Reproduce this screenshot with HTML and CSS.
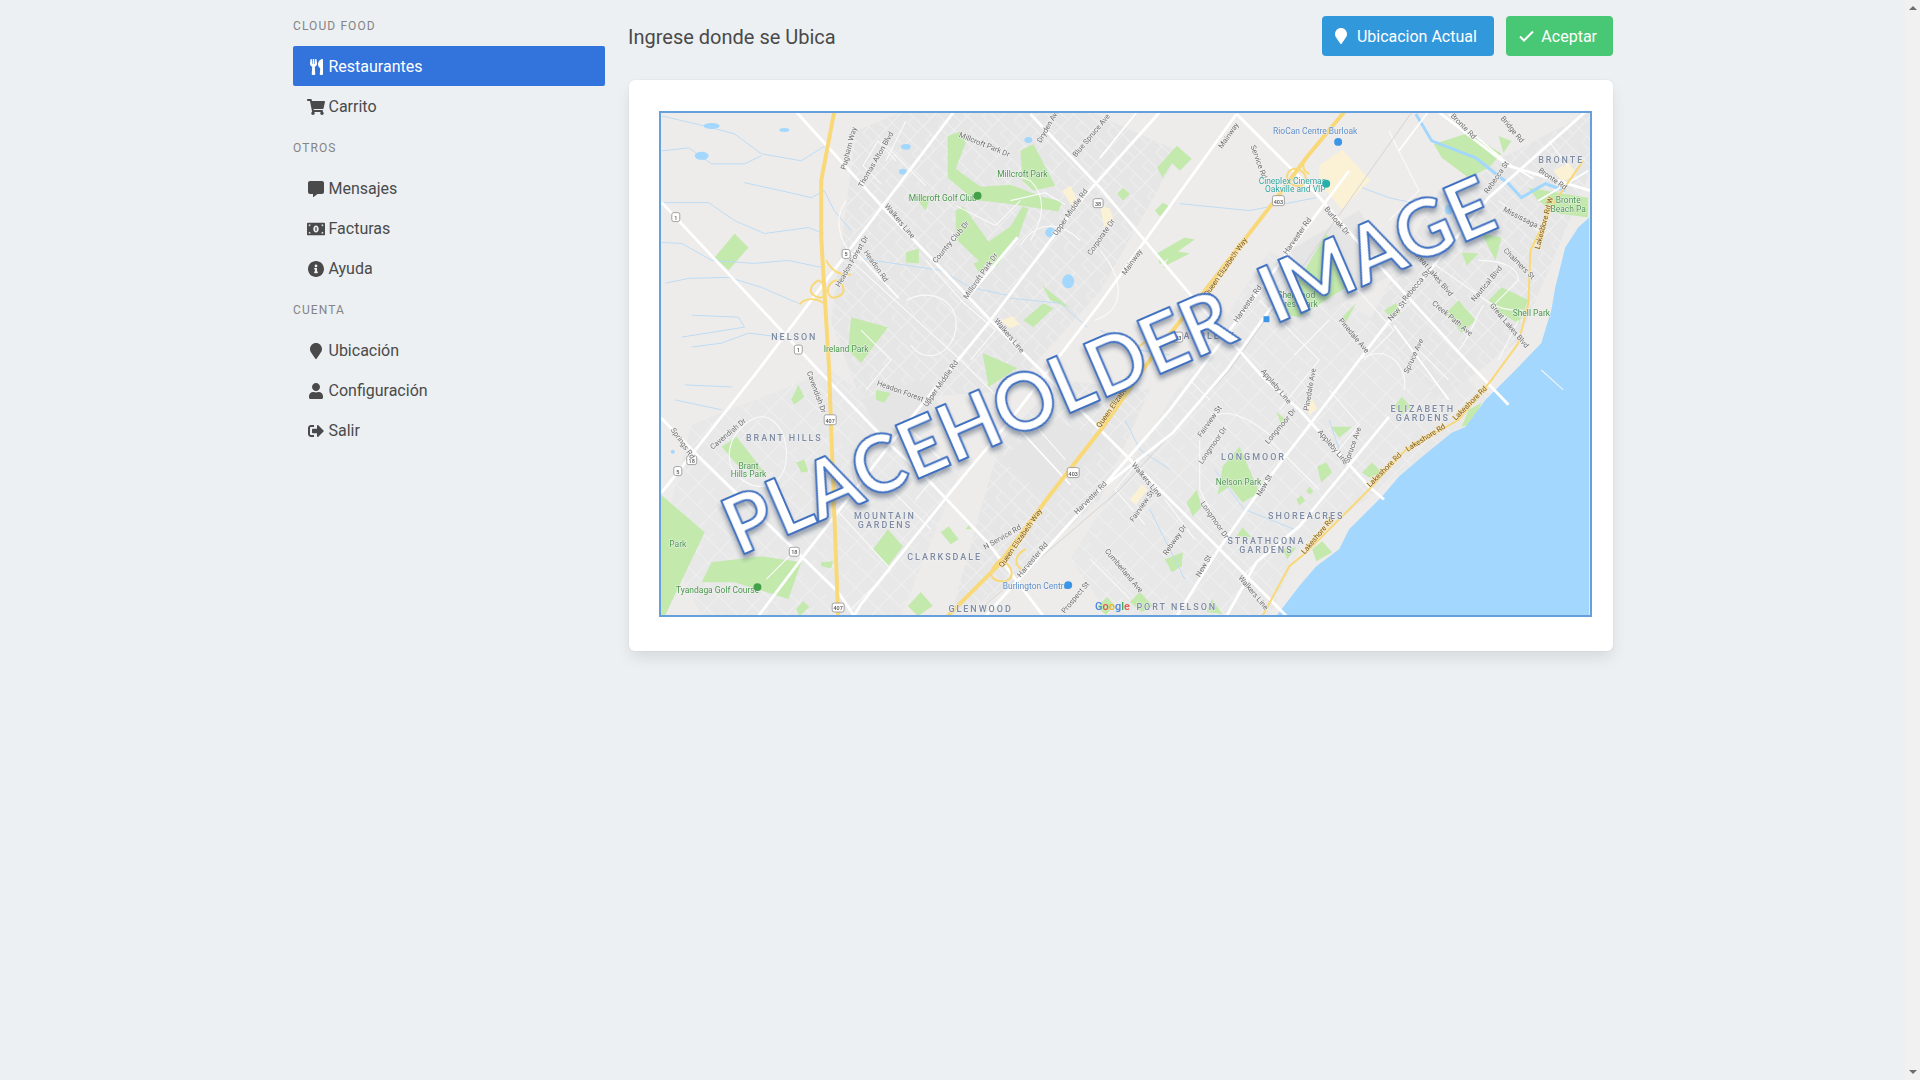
FILE: index.html
```html
<!DOCTYPE html>
<html lang="es">
<head>
    <meta charset="UTF-8">
    <meta name="viewport" content="width=device-width, initial-scale=1.0">
    <title>Cloud Food</title>
    <link rel="stylesheet" href="styles.css">
</head>
<body>
    <div class="page">
        <aside class="sidebar">
            <p class="menu-label">Cloud Food</p>
            <ul class="menu-list">
                <li><a class="is-active"><span class="icon"><svg width="13" height="16" viewBox="0 0 416 512"><path d="M207.9 15.2c.8 4.7 16.1 94.5 16.1 128.8 0 52.3-27.8 89.6-68.9 104.6L168 486.7c.7 13.7-10.2 25.3-24 25.3H80c-13.7 0-24.7-11.5-24-25.3l12.9-238.1C27.7 233.6 0 196.2 0 144 0 109.6 15.3 19.9 16.1 15.2 19.3-5.1 61.4-5.4 64 16.3v141.2c1.3 3.4 15.1 3.2 16 0 1.4-25.3 7.9-139.2 8-141.8 3.3-20.8 44.7-20.8 47.9 0 .2 2.7 6.6 116.5 8 141.8.9 3.2 14.8 3.4 16 0V16.3c2.6-21.6 44.8-21.4 48-1.1zm119.2 285.7l-15 185.1c-1.2 14 9.9 26 23.9 26h56c13.3 0 24-10.7 24-24V24c0-13.2-10.7-24-24-24-82.5 0-221.4 178.5-64.9 300.9z"/></svg></span>Restaurantes</a></li>
                <li><a><span class="icon"><svg width="18" height="16" viewBox="0 0 576 512"><path d="M528.12 301.319l47.273-208C578.806 78.301 567.391 64 551.99 64H159.208l-9.166-44.81C147.758 8.021 137.93 0 126.529 0H24C10.745 0 0 10.745 0 24v16c0 13.255 10.745 24 24 24h69.883l70.248 343.435C147.325 417.1 136 435.222 136 456c0 30.928 25.072 56 56 56s56-25.072 56-56c0-15.674-6.447-29.835-16.824-40h209.647C430.447 426.165 424 440.326 424 456c0 30.928 25.072 56 56 56s56-25.072 56-56c0-22.172-12.888-41.332-31.579-50.405l5.517-24.276c3.413-15.018-8.002-29.319-23.403-29.319H218.117l-6.545-32h293.145c11.206 0 20.92-7.754 23.403-18.681z"/></svg></span>Carrito</a></li>
            </ul>
            <p class="menu-label">Otros</p>
            <ul class="menu-list">
                <li><a><span class="icon"><svg width="16" height="16" viewBox="0 0 512 512"><path d="M448 0H64C28.7 0 0 28.7 0 64v288c0 35.3 28.7 64 64 64h96v84c0 9.8 11.2 15.5 19.1 9.7L304 416h144c35.3 0 64-28.7 64-64V64c0-35.3-28.7-64-64-64z"/></svg></span>Mensajes</a></li>
                <li><a><span class="icon"><svg width="18" height="14" viewBox="0 0 640 448"><path fill-rule="evenodd" d="M32 0h576c18 0 32 14 32 32v384c0 18-14 32-32 32H32c-18 0-32-14-32-32V32C0 14 14 0 32 0zM64 64v64c35 0 64-29 64-64H64zm512 0h-64c0 35 29 64 64 64V64zM64 384h64c0-35-29-64-64-64v64zm512 0v-64c-35 0-64 29-64 64h64zM320 96c-53 0-96 57-96 128s43 128 96 128 96-57 96-128-43-128-96-128z"/><rect x="296" y="160" width="48" height="128"/></svg></span>Facturas</a></li>
                <li><a><span class="icon"><svg width="16" height="16" viewBox="8 8 496 496"><path d="M256 8C119.043 8 8 119.083 8 256c0 136.997 111.043 248 248 248s248-111.003 248-248C504 119.083 392.957 8 256 8zm0 110c23.196 0 42 18.804 42 42s-18.804 42-42 42-42-18.804-42-42 18.804-42 42-42zm56 254c0 6.627-5.373 12-12 12h-88c-6.627 0-12-5.373-12-12v-24c0-6.627 5.373-12 12-12h12v-64h-12c-6.627 0-12-5.373-12-12v-24c0-6.627 5.373-12 12-12h64c6.627 0 12 5.373 12 12v100h12c6.627 0 12 5.373 12 12v24z"/></svg></span>Ayuda</a></li>
            </ul>
            <p class="menu-label">Cuenta</p>
            <ul class="menu-list">
                <li><a><span class="icon"><svg width="12" height="16" viewBox="0 0 384 512"><path d="M172.268 501.67C26.97 291.031 0 269.413 0 192 0 85.961 85.961 0 192 0s192 85.961 192 192c0 77.413-26.97 99.031-172.268 309.67-9.535 13.774-29.93 13.773-39.464 0z"/></svg></span>Ubicación</a></li>
                <li><a><span class="icon"><svg width="14" height="16" viewBox="0 0 448 512"><path d="M224 256c70.7 0 128-57.3 128-128S294.7 0 224 0 96 57.3 96 128s57.3 128 128 128zm89.6 32h-16.7c-22.2 10.2-46.9 16-72.9 16s-50.6-5.8-72.9-16h-16.7C60.2 288 0 348.2 0 422.4V464c0 26.5 21.5 48 48 48h352c26.5 0 48-21.5 48-48v-41.6c0-74.2-60.2-134.4-134.4-134.4z"/></svg></span>Configuración</a></li>
                <li><a><span class="icon"><svg width="16" height="14" viewBox="0 64 512 384"><path d="M497 273L329 441c-15 15-41 4.5-41-17v-96H152c-13.3 0-24-10.7-24-24v-96c0-13.3 10.7-24 24-24h136V88c0-21.4 25.9-32 41-17l168 168c9.3 9.4 9.3 24.6 0 34zM192 436v-40c0-6.6-5.4-12-12-12H96c-17.7 0-32-14.3-32-32V160c0-17.7 14.3-32 32-32h84c6.6 0 12-5.4 12-12V76c0-6.6-5.4-12-12-12H96c-53 0-96 43-96 96v192c0 53 43 96 96 96h84c6.6 0 12-5.4 12-12z"/></svg></span>Salir</a></li>
            </ul>
        </aside>

        <main class="content">
            <div class="toolbar">
                <h2 class="title">Ingrese donde se Ubica</h2>
                <div class="buttons">
                    <a class="button is-info"><svg class="btn-icon" width="12" height="16" viewBox="0 0 384 512"><path d="M172.268 501.67C26.97 291.031 0 269.413 0 192 0 85.961 85.961 0 192 0s192 85.961 192 192c0 77.413-26.97 99.031-172.268 309.67-9.535 13.774-29.93 13.773-39.464 0z"/></svg>Ubicacion Actual</a>
                    <a class="button is-success"><svg class="btn-icon check" width="15" height="12" viewBox="0 0 15 12"><path d="M1 6.5l4 4L14 1.5"/></svg>Aceptar</a>
                </div>
            </div>

            <div class="box">
                <svg class="map" viewBox="660 112 931 504" width="933" height="506" role="img" aria-label="Mapa">
                    <defs>
                        <filter id="soft" x="0" y="0" width="1" height="1"><feGaussianBlur stdDeviation="0.35"/></filter>
                        <filter id="lift" x="-5%" y="-20%" width="110%" height="140%"><feDropShadow dx="-2" dy="4" stdDeviation="2.2" flood-color="#2b3a55" flood-opacity=".4"/></filter>
                        <pattern id="blocks" width="25" height="19" patternUnits="userSpaceOnUse" patternTransform="rotate(44)"><rect width="25" height="19" fill="#e6e6e6"/><path d="M0 .5h25M.5 0v19M12 0v9M12 9h13" class="grid"/></pattern>
                        <pattern id="blocks2" width="17" height="31" patternUnits="userSpaceOnUse" patternTransform="rotate(-46)"><rect width="17" height="31" fill="#e8e8e8"/><path d="M0 .5h17M.5 0v31M0 15h9" class="grid"/></pattern>
                    </defs>
                    <g filter="url(#soft)">
                        <rect x="659" y="111" width="933" height="506" class="land"/>

                        <!-- zonas urbanas -->
                        <path fill="url(#blocks)" d="M855 130l45-19h190l90 40-80 140-90 100-150 10-30-80z"/>
                        <path fill="url(#blocks2)" d="M690 425l140-55 130 100-60 147H700l-40-80z"/>
                        <path fill="url(#blocks)" d="M1000 440l60-60 90 10-50 110-110 100-40 17z"/>
                        <path fill="url(#blocks2)" d="M1170 400l100-150 120 80 110 70-200 150-30 67h-160l-40-57z"/>
                        <path fill="url(#blocks)" d="M1440 190l152-79v60l-72 170-80 60-70-80z"/>
                        <path class="urban" d="M1290 250l70-40 40 60-70 40zM1000 460l50-40 60 20-60 60zM860 400l60-20 30 40-60 30z"/>

                        <!-- parques -->
                        <g class="park">
                            <path d="M1033 143l22 42-22 5-11-10-2-30zM947 135l14-5 4 12-10 26 25 18 30-2 32 12 20 5-4 10-50-8-35-4-26-22zM913 195l17 0-5 15zM955 210l8-4 25 35 22-15 12-20 6 2-10 28-22 30-14-2-27-26zM713 257l20-24 14 14-20 23zM850 317l37 10-27 36-13-13zM905 252l13-4v15l-13-1zM973 263l7-3 5 7-7 5zM1042 285l28 23-20-8zM1023 320l20-17 10 5-20 19zM982 353l35 15-29 19zM875 390l15 3-7 10-8-3zM1163 268l10-18 17 3-20 10zM1157 167l20-22 15 13-12 12-8-8-9 15zM1117 193l6-6 7 6-7 7zM1155 210l8-8 6 3-9 11zM1280 313l27-46 20-34 26 50-53 34zM1435 143l35-11 33 21-13 14-20 10-27-20zM1500 135l13 5-8 12zM1530 187l60 10v20l-30-4-20-13zM1483 233l20 4-6 23zM1463 252l17 1-12 12zM1490 300l13-13 27 13-10 23-23-13zM1447 313l13-13 17 20-14 13zM1385 310l12-7 5 10-9 5zM1340 320l17-17-10 19zM659 495l44 38-40 84h-4zM710 563l50-6 40 6-13 37-54-17-33 0zM720 447l15-10 18 23 10 13-26-6zM790 400l7-15 6 12-10 8zM795 463l8-3 4 12-7 1zM872 550l15-20 15 17-15 20zM940 533l8-6 10 13-8 5zM820 563l12-1-2 7-10-2zM907 607l13-14 12 14-15 10zM795 610l7-8 6 6-10 9zM1223 467l17-20 20 46-17 10-13-16-12 8zM1187 503l10-13 5 17-9 10zM1277 412l10 8-5 5zM1332 427l21 0-13 11zM1318 467l9-4 6 10-11 10zM1363 473l10-10 10 10-13 5zM1297 500l5-4 4 5-6 5zM1307 492l3-5 4 5-3 3zM1395 407l8-10 9 10-9 8zM1463 427l7-17 13-7-10 22zM1313 550l10-8 10 11-16 9zM1237 537l6-9 9 10zM1283 550l14-2-9 12zM1165 560l18-7-1 14-10 6zM1130 603l10-10 13 14-11 6zM1207 613l5-13 11 15zM1157 253l28-16 10 2-35 25zM965 530l3-4 3 4zM1097 608l10-10 7 8-8 10z"/>
                        </g>
                        <path class="beige" d="M1320 165l23-16 28 30-28 30-23-27zM1062 190l10 16 6-5-8-16zM1100 205l10 3 4 14-10 4zM1000 320l12-4 7 8-9 4zM1130 500l12-15 6 5-12 15zM1305 405l8-6 5 10-8 6zM1555 170l16-8 7 12-14 7z"/>

                        <!-- agua -->
                        <g class="stream">
                            <path d="M660 115l43 10 30 8 27 20 40 7 27-17M660 150l27-3 23 16h33l17-8M743 182l37 8 30 7 13-7 10 20 17 20M660 202h47l26 18 30 13 44-6 16 6M660 242l20 1 30 17 43 3 34-3 33 7M663 283l24-5 40-1 33 10 37 16M690 315l47 2 6 10-63 10M690 347l30-4 27-10 33 4M683 385l47 2M673 400l47 10M860 258l33 5 47 7 30 17 37 8M1010 298l50 5 27 24M1180 203l70 7 67-13M1363 187l27 10 27 6M1100 330l40 20 30 5M1125 420l15 30 30 20M1215 470l30 40 50 20M1150 510l20 40 15 30M1330 420l10 30"/>
                        </g>
                        <path class="creek" d="M1417 113l16 27 44 17 33 26 13 14 24-14 20 7"/>
                        <g class="water">
                            <path d="M1277 617l23-30 17-20 23-17 10-20 17-17 16-16 17-20 20-17 33-27 14-6 20-27 30-30 26-27 10-33 4-23 10-40 13-20 11-10v400z"/>
                            <ellipse cx="710" cy="125" rx="8" ry="3"/><ellipse cx="700" cy="155" rx="7" ry="4"/><ellipse cx="783" cy="129" rx="5" ry="2"/><ellipse cx="905" cy="146" rx="5" ry="3"/><ellipse cx="902" cy="171" rx="4" ry="3"/><ellipse cx="1028" cy="139" rx="4" ry="3"/><ellipse cx="1068" cy="281" rx="6" ry="7"/><ellipse cx="1050" cy="232" rx="5" ry="5"/><ellipse cx="1450" cy="209" rx="4" ry="5"/><ellipse cx="671" cy="452" rx="2" ry="2"/>
                        </g>
                        <path class="pier" d="M1543 370l22 20"/>

                        <!-- calles menores -->
                        <g class="street">
                            <path d="M853 263l107 97 40 40M895 160l-18-20-15 25 18 18M880 140l45 45M905 120l-20 40M845 200c-15 20-5 50 15 60M860 330l30 30-25 30M905 300c30-15 55 5 50 30s-30 35-45 15M925 260l40 45M1005 170l25 10c15 15 15 35 0 60M1010 200l35-8 20 12M955 205l40 20 25-25M1020 245c15-25 40-25 60-5M1100 250c25 30 25 60-5 70M960 300l35 30-25 30M900 420l45 45-30 35M860 490c-20-30 5-60 30-50M750 420c-25 15-30 45-10 60s45 5 45-25-20-45-35-35M760 520l35 30-30 30M880 480l50 50M835 510l55 60-40 40M1030 420l35 40M1115 330c20 15 30 40 10 60M1180 305c20-15 40 5 40 25l-20 25M1260 300l60 60-40 50M1350 280l45 50-30 30M1210 420c10-10 30-10 60 15M1200 440v50l15 30M1270 440l50 50M1330 390l30 35-20 25M1360 360c30-20 50 10 45 30M1480 260c30 0 40 10 40 20l-25 25M1430 260l50 35c20 15 30 15 45 15M1485 305c-10 15-15 35-25 45M1420 350l30 30M1330 320l-35 35M1520 320l-20 40M1165 500l30 40M1090 560l40 40M1240 580l30-30M1140 460l-25 30 30 35M1190 380l20 20M1390 130l30 60-30 30M1500 200l40 30M1550 140l20 25"/>
                        </g>

                        <path class="rail" d="M1413 111l-183 259-110 120-140 120"/>

                        <!-- vias principales -->
                        <g class="road">
                            <path d="M795 111l87 96 108 113 50 50 93 93 130 130 24 24M660 202l157 168 70 73 40 37 60 63 56 74M659 418l41 42 137 133 16 24M1237 113l80 80 43 50 107 117 43 45M1030 113l70 74 87 103 76 87 37 33 70 77 15 13M1440 111l70 54 82 25M953 111l-196 259-97 123M1160 111l-77 86-33 43-60 80-87 107-103 133-43 57M1237 113l-94 130-43 60-90 117-50 60-100 125-7 12M1350 170l-60 80-50 67-70 93-67 77-118 130M1587 111l-97 86-97 120-130 170-46 66-40 64M1390 417l-90 110-43 36-30 54M1100 490l73-57 54-63 50-70M1017 237l-50 60"/>
                        </g>
                        <path class="road-thin" d="M1100 157l37-46M853 250l45 48M1450 113l60 50 25 15M1395 325l55 75M1540 200l50-30M1010 420l60 65M1400 150l30-40"/>

                        <!-- autopistas -->
                        <g class="highway">
                            <path d="M833 111l-13 69v57l3 50 5 83 2 60 7 187M1345 111l-38 46-34 46-73 94-43 53-54 77-53 68-53 72-50 50"/>
                            <path class="ramp" d="M1263 617l27-50 17-14 63-63 37-40 53-30 33-40 27-37 10-40 2-53 23-47 30-43"/>
                            <path class="ramp" d="M817 280c-10 6-10 14 0 17s10-14 0-17zM835 280c10 5 10 14 0 17s-12-14 0-17zM1000 560c-10 8-15 20 0 22s15-15 0-22zM1025 550c-10 5-12 15-4 20M1150 340c-15 5-20 20-5 25M1296 168c-10 0-12 14 0 17s16-14 0-17zM1310 155c-8 5-8 15 0 18M825 305c-8-8-20-8-27-1M825 260c5 10 14 16 25 14"/>
                        </g>

                        <!-- escudos -->
                        <g class="shield">
                            <rect x="823" y="415" width="12" height="10" rx="2"/><text x="829" y="423">407</text>
                            <rect x="831" y="604" width="12" height="9" rx="2"/><text x="837" y="611">407</text>
                            <rect x="1067" y="468" width="12" height="10" rx="2"/><text x="1073" y="476">403</text>
                            <rect x="1273" y="195" width="12" height="10" rx="2"/><text x="1279" y="203">403</text>
                            <rect x="1171" y="332" width="12" height="10" rx="2"/><text x="1177" y="340">403</text>
                            <rect x="670" y="212" width="8" height="9" rx="2"/><text x="674" y="219">1</text>
                            <rect x="793" y="345" width="8" height="9" rx="2"/><text x="797" y="352">1</text>
                            <rect x="841" y="249" width="8" height="9" rx="2"/><text x="845" y="256">5</text>
                            <rect x="1093" y="198" width="10" height="9" rx="2"/><text x="1098" y="205">38</text>
                            <rect x="685" y="456" width="10" height="9" rx="2"/><text x="690" y="463">18</text>
                            <rect x="788" y="548" width="10" height="9" rx="2"/><text x="793" y="555">18</text>
                            <rect x="672" y="467" width="8" height="9" rx="2"/><text x="676" y="474">5</text>
                        </g>

                        <!-- etiquetas de calles -->
                        <g class="lbl">
                            <text x="983" y="146" transform="rotate(22 983 146)">Millcroft Park Dr</text>
                            <text x="850" y="148" transform="rotate(-75 850 148)">Pugham Way</text>
                            <text x="877" y="160" transform="rotate(-60 877 160)">Thomas Alton Blvd</text>
                            <text x="897" y="222" transform="rotate(50 897 222)">Walkers Line</text>
                            <text x="952" y="243" transform="rotate(-50 952 243)">Country Club Dr</text>
                            <text x="982" y="277" transform="rotate(-55 982 277)">Millcroft Park Dr</text>
                            <text x="853" y="262" transform="rotate(-60 853 262)">Headon Forest Dr</text>
                            <text x="873" y="267" transform="rotate(55 873 267)">Headon Rd</text>
                            <text x="1072" y="213" transform="rotate(-55 1072 213)">Upper Middle Rd</text>
                            <text x="1103" y="238" transform="rotate(-55 1103 238)">Corporate Dr</text>
                            <text x="1007" y="337" transform="rotate(50 1007 337)">Walkers Line</text>
                            <text x="1093" y="136" transform="rotate(-50 1093 136)">Blue Spruce Ave</text>
                            <text x="1050" y="126" transform="rotate(-60 1050 126)">Dryden Ave</text>
                            <text x="1231" y="136" transform="rotate(-55 1231 136)">Mainway</text>
                            <text x="1257" y="162" transform="rotate(70 1257 162)">Service Rd</text>
                            <text x="1463" y="127" transform="rotate(45 1463 127)">Bronte Rd</text>
                            <text x="1512" y="130" transform="rotate(50 1512 130)">Bridge Rd</text>
                            <text x="1553" y="180" transform="rotate(35 1553 180)">Bronte Rd</text>
                            <text x="1500" y="178" transform="rotate(-55 1500 178)">Rebecca St</text>
                            <text x="1525" y="221" transform="rotate(27 1525 221)">Mississaga St</text>
                            <text x="1336" y="222" transform="rotate(50 1336 222)">Burloak Dr</text>
                            <text x="1300" y="237" transform="rotate(-55 1300 237)">Harvester Rd</text>
                            <text x="1134" y="263" transform="rotate(-55 1134 263)">Mainway</text>
                            <text x="1250" y="305" transform="rotate(-55 1250 305)">Harvester Rd</text>
                            <text x="1433" y="275" transform="rotate(50 1433 275)">Great Lakes Blvd</text>
                            <text x="1419" y="287" transform="rotate(-50 1419 287)">Rebecca St</text>
                            <text x="1400" y="312" transform="rotate(-50 1400 312)">New St</text>
                            <text x="1452" y="320" transform="rotate(40 1452 320)">Creek Path Ave</text>
                            <text x="1353" y="337" transform="rotate(50 1353 337)">Pinedale Ave</text>
                            <text x="1519" y="265" transform="rotate(45 1519 265)">Chalmers St</text>
                            <text x="1490" y="285" transform="rotate(-50 1490 285)">Nautical Blvd</text>
                            <text x="1509" y="327" transform="rotate(50 1509 327)">Great Lakes Blvd</text>
                            <text x="1417" y="357" transform="rotate(-65 1417 357)">Spruce Ave</text>
                            <text x="728" y="436" transform="rotate(-40 728 436)">Cavendish Dr</text>
                            <text x="813" y="393" transform="rotate(70 813 393)">Cavendish Dr</text>
                            <text x="903" y="395" transform="rotate(20 903 395)">Headon Forest Dr</text>
                            <text x="942" y="385" transform="rotate(-55 942 385)">Upper Middle Rd</text>
                            <text x="679" y="445" transform="rotate(55 679 445)">Springs Rd</text>
                            <text x="1003" y="540" transform="rotate(-30 1003 540)">N Service Rd</text>
                            <text x="1092" y="500" transform="rotate(-45 1092 500)">Harvester Rd</text>
                            <text x="1034" y="562" transform="rotate(-50 1034 562)">Harvester Rd</text>
                            <text x="1077" y="600" transform="rotate(-50 1077 600)">Prospect St</text>
                            <text x="1275" y="388" transform="rotate(50 1275 388)">Appleby Line</text>
                            <text x="1332" y="449" transform="rotate(50 1332 449)">Appleby Line</text>
                            <text x="1215" y="447" transform="rotate(-55 1215 447)">Longmoor Dr</text>
                            <text x="1283" y="428" transform="rotate(-50 1283 428)">Longmoor Dr</text>
                            <text x="1213" y="522" transform="rotate(55 1213 522)">Longmoor Dr</text>
                            <text x="1145" y="482" transform="rotate(50 1145 482)">Walkers Line</text>
                            <text x="1252" y="595" transform="rotate(50 1252 595)">Walkers Line</text>
                            <text x="1212" y="423" transform="rotate(-55 1212 423)">Fairview St</text>
                            <text x="1144" y="508" transform="rotate(-55 1144 508)">Fairview St</text>
                            <text x="1267" y="487" transform="rotate(-60 1267 487)">New St</text>
                            <text x="1206" y="568" transform="rotate(-60 1206 568)">New St</text>
                            <text x="1356" y="446" transform="rotate(-70 1356 446)">Spruce Ave</text>
                            <text x="1313" y="390" transform="rotate(-80 1313 390)">Pinedale Ave</text>
                            <text x="1122" y="573" transform="rotate(50 1122 573)">Cumberland Ave</text>
                            <text x="1177" y="542" transform="rotate(-55 1177 542)">Rebway Dr</text>
                        </g>
                        <g class="lbl brown">
                            <text x="1548" y="223" transform="rotate(-75 1548 223)">Lakeshore Rd W</text>
                            <text x="1228" y="268" transform="rotate(-55 1228 268)">Queen Elizabeth Way</text>
                            <text x="1022" y="540" transform="rotate(-55 1022 540)">Queen Elizabeth Way</text>
                            <text x="1120" y="400" transform="rotate(-55 1120 400)">Queen Elizabeth Way</text>
                            <text x="1320" y="538" transform="rotate(-50 1320 538)">Lakeshore Rd</text>
                            <text x="1387" y="472" transform="rotate(-45 1387 472)">Lakeshore Rd</text>
                            <text x="1428" y="440" transform="rotate(-32 1428 440)">Lakeshore Rd</text>
                            <text x="1473" y="405" transform="rotate(-45 1473 405)">Lakeshore Rd</text>
                        </g>

                        <!-- barrios -->
                        <g class="hood">
                            <text x="793" y="340">NELSON</text>
                            <text x="1563" y="162">BRONTE</text>
                            <text x="1210" y="339">APPLEBY</text>
                            <text x="783" y="441">BRANT HILLS</text>
                            <text x="884" y="520">MOUNTAIN</text>
                            <text x="884" y="529">GARDENS</text>
                            <text x="944" y="561">CLARKSDALE</text>
                            <text x="980" y="613">GLENWOOD</text>
                            <text x="1424" y="412">ELIZABETH</text>
                            <text x="1424" y="421">GARDENS</text>
                            <text x="1254" y="460">LONGMOOR</text>
                            <text x="1307" y="520">SHOREACRES</text>
                            <text x="1267" y="545">STRATHCONA</text>
                            <text x="1267" y="554">GARDENS</text>
                            <text x="1177" y="611">PORT NELSON</text>
                        </g>

                        <!-- lugares -->
                        <g class="place green">
                            <text x="1022" y="176">Millcroft Park</text>
                            <text x="942" y="200">Millcroft Golf Club</text>
                            <text x="845" y="352">Ireland Park</text>
                            <text x="1533" y="316">Shell Park</text>
                            <text x="1570" y="202">Bronte</text>
                            <text x="1570" y="211">Beach Pa</text>
                            <text x="1297" y="298">Sherwood</text>
                            <text x="1297" y="307">Forest Park</text>
                            <text x="747" y="469">Brant</text>
                            <text x="747" y="477">Hills Park</text>
                            <text x="716" y="594">Tyandaga Golf Course</text>
                            <text x="1239" y="485">Nelson Park</text>
                            <text x="676" y="548">Park</text>
                        </g>
                        <g class="place blue">
                            <text x="1316" y="133">RioCan Centre Burloak</text>
                            <text x="1035" y="590">Burlington Centre</text>
                        </g>
                        <g class="place teal">
                            <text x="1293" y="183">Cineplex Cinemas</text>
                            <text x="1296" y="191">Oakville and VIP</text>
                        </g>
                        <path class="pin-green" d="M977 191a4 4 0 1 1 0 8l-0 3zM977 191a4 4 0 1 0 0 8zM756 584a4 4 0 1 1 0 8v3zM756 584a4 4 0 1 0 0 8z"/>
                        <path class="pin-blue" d="M1339 137a4 4 0 1 1 0 8v3zM1339 137a4 4 0 1 0 0 8zM1068 582a4 4 0 1 1 0 8v3zM1068 582a4 4 0 1 0 0 8z"/>
                        <path class="pin-teal" d="M1327 179a4 4 0 1 1 0 8v3zM1327 179a4 4 0 1 0 0 8z"/>
                        <rect x="1264" y="316" width="6" height="6" class="pin-blue"/>

                        <text class="google" x="1095" y="611"><tspan class="g-blue">G</tspan><tspan class="g-red">o</tspan><tspan class="g-yellow">o</tspan><tspan class="g-blue">g</tspan><tspan class="g-green">l</tspan><tspan class="g-red">e</tspan></text>
                    </g>

                    <text class="placeholder" x="737" y="557" transform="rotate(-23.4 737 557)" textLength="834" lengthAdjust="spacingAndGlyphs" filter="url(#lift)">PLACEHOLDER  IMAGE</text>
                </svg>
            </div>
        </main>

        <div class="scrollbar">
            <span class="arrow-up"></span>
            <span class="arrow-down"></span>
        </div>
    </div>
</body>
</html>
```

FILE: styles.css
```css
* {
    box-sizing: border-box;
}

html, body {
    margin: 0;
    height: 100%;
}

body {
    font-family: Roboto, "Liberation Sans", sans-serif;
    font-size: 16px;
    color: #4a4a4a;
    background-color: #ecf0f3;
    overflow: hidden;
}

.page {
    display: flex;
    height: 100vh;
}

/* menu lateral */
.sidebar {
    width: 312px;
    margin-left: 293px;
    padding-top: 16px;
    flex-shrink: 0;
}

.menu-label {
    margin: 12px 0 11px;
    padding-top: 1px;
    font-size: 12px;
    line-height: 18px;
    letter-spacing: 1.1px;
    text-transform: uppercase;
    color: #848484;
}

.menu-label:first-child {
    margin-top: 0;
}

.menu-list {
    list-style: none;
    margin: 0;
    padding: 0;
}

.menu-list a {
    display: flex;
    align-items: center;
    height: 40px;
    padding: 2px 12px 0;
    border-radius: 2px;
    color: #4a4a4a;
    line-height: 24px;
}

.menu-list a.is-active {
    background-color: #3273dc;
    color: #fff;
}

.icon {
    display: flex;
    align-items: center;
    justify-content: center;
    width: 23.5px;
    height: 24px;
    padding-right: 1px;
}

.icon svg {
    flex-shrink: 0;
    fill: currentColor;
}

/* contenido */
.content {
    width: 984px;
    margin-left: 24px;
    flex-shrink: 0;
}

.toolbar {
    display: flex;
    justify-content: space-between;
    align-items: center;
    height: 40px;
    margin-top: 16px;
    margin-bottom: 24px;
}

.title {
    margin: 2px 0 0 -1px;
    font-size: 20px;
    font-weight: 400;
    line-height: 28px;
    color: #4a4a4a;
}

.buttons {
    display: flex;
    gap: 12px;
}

.button {
    display: flex;
    align-items: center;
    height: 40px;
    padding: 0 17.5px 0 13px;
    border-radius: 4px;
    color: #fff;
    font-size: 16px;
}

.button.is-info {
    background-color: #3298dc;
}

.button.is-success {
    padding-right: 16px;
    background-color: #48c774;
}

.btn-icon {
    margin-right: 10px;
    fill: #fff;
}

.btn-icon.check {
    margin-right: 7px;
    fill: none;
    stroke: #fff;
    stroke-width: 2;
}

.box {
    height: 571px;
    padding: 31px 21px 34px 30px;
    background-color: #fff;
    border-radius: 6px;
    box-shadow: 0 8px 16px -2px rgba(10, 10, 10, 0.1), 0 0 0 1px rgba(10, 10, 10, 0.02);
}

.map {
    display: block;
    border: 2px solid #659fdc;
}

/* barra de scroll */
.scrollbar {
    position: fixed;
    top: 0;
    right: 0;
    bottom: 0;
    width: 15px;
    display: flex;
    flex-direction: column;
    justify-content: space-between;
    align-items: center;
    padding: 6px 0;
    background-color: #f1f1f1;
}

.arrow-up {
    border-left: 4px solid transparent;
    border-right: 4px solid transparent;
    border-bottom: 4px solid #6e6e6e;
}

.arrow-down {
    border-left: 4px solid transparent;
    border-right: 4px solid transparent;
    border-top: 4px solid #6e6e6e;
}

/* mapa */
.land { fill: #eeecea; }
.urban { fill: #e5e5e5; }
.grid { fill: none; stroke: #f1f1f1; stroke-width: 0.8; }
.park path { fill: #c3e9ad; }
.beige { fill: #fbf1d4; }
.water path, .water ellipse { fill: #a3d7fd; }
.stream path { fill: none; stroke: #bcdcf5; stroke-width: 1; }
.creek { fill: none; stroke: #a3d7fd; stroke-width: 3; }
.pier { fill: none; stroke: #eef4f8; stroke-width: 1.2; }
.street path { fill: none; stroke: #fafafa; stroke-width: 1.1; }
.rail { fill: none; stroke: #d4d4d4; stroke-width: 1; }
.road path { fill: none; stroke: #fff; stroke-width: 2.8; }
.road-thin { fill: none; stroke: #fff; stroke-width: 1.7; }
.highway path { fill: none; stroke: #f9d878; stroke-width: 4; }
.highway .ramp { stroke-width: 2; }

.shield rect { fill: #fff; stroke: #8d8d8d; stroke-width: 0.8; }
.shield text { font-size: 5.5px; font-weight: 500; fill: #555; text-anchor: middle; }

.lbl text { font-size: 7.5px; fill: #6e6e6e; text-anchor: middle; stroke: #f3f3f3; stroke-width: 1.2px; paint-order: stroke; }
.lbl.brown text { fill: #7a5a22; stroke: #fbe6ae; }

.hood text { font-size: 9px; font-weight: 500; letter-spacing: 2px; fill: #7d8ba3; text-anchor: middle; stroke: #f0f0f0; stroke-width: 1px; paint-order: stroke; }

.place text { font-size: 8.5px; text-anchor: middle; stroke: #f2f2f2; stroke-width: 1px; paint-order: stroke; }
.place.green text { fill: #47964a; }
.place.blue text { fill: #5f8fc9; }
.place.teal text { fill: #36a6a0; }
.pin-green { fill: #45a14a; }
.pin-blue { fill: #3b96e8; }
.pin-teal { fill: #27b0ad; }

.google { font-size: 11px; font-weight: 500; }
.g-blue { fill: #4a86e8; }
.g-red { fill: #e0574a; }
.g-yellow { fill: #e8b530; }
.g-green { fill: #3fa95a; }

.placeholder {
    font-family: Lato, "Open Sans", sans-serif;
    font-size: 80px;
    font-weight: 700;
    white-space: pre;
    fill: #fff;
    stroke: #3f6fc0;
    stroke-width: 2px;
    stroke-linejoin: round;
}
```
